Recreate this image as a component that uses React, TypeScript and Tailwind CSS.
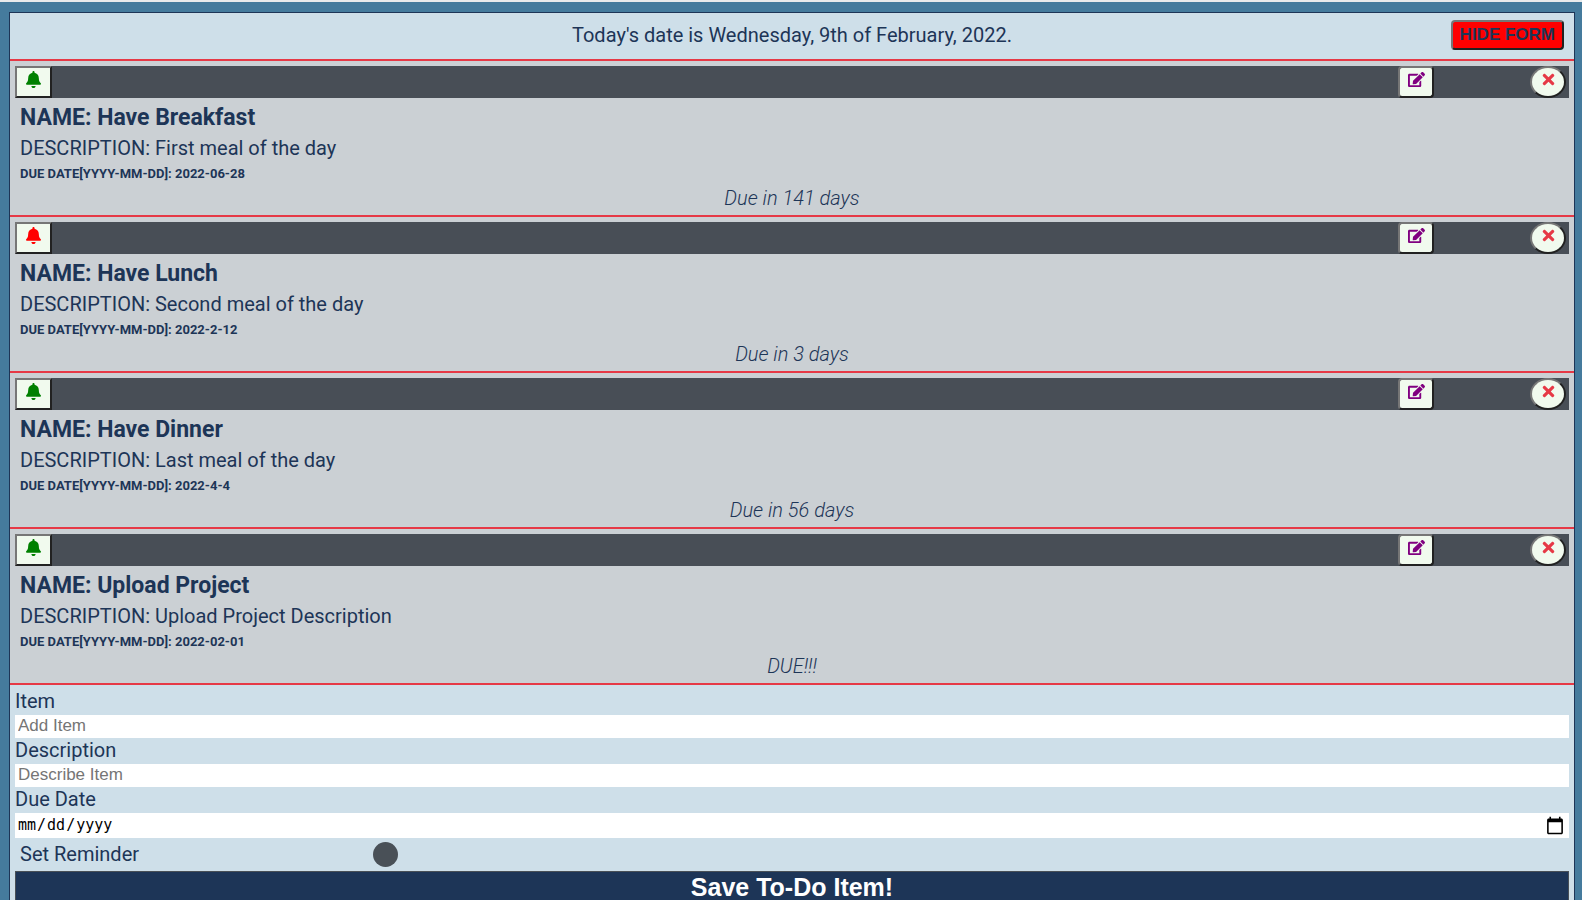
import { useState } from "react";
import { FaBell, FaEdit, FaTimes } from "react-icons/fa";

type Todo = {
  id: number;
  name: string;
  description: string;
  dueDate: string;
  status: string;
  reminder: boolean;
};

const initialTodos: Todo[] = [
  { id: 1, name: "Have Breakfast", description: "First meal of the day", dueDate: "2022-06-28", status: "Due in 141 days", reminder: true },
  { id: 2, name: "Have Lunch", description: "Second meal of the day", dueDate: "2022-2-12", status: "Due in 3 days", reminder: false },
  { id: 3, name: "Have Dinner", description: "Last meal of the day", dueDate: "2022-4-4", status: "Due in 56 days", reminder: true },
  { id: 4, name: "Upload Project", description: "Upload Project Description", dueDate: "2022-02-01", status: "DUE!!!", reminder: true },
];

const bevel = "border-2 border-t-[#767676] border-l-[#767676] border-b-[#212121] border-r-[#212121]";

function TodoCard({ todo, onToggle, onDelete }: { todo: Todo; onToggle: () => void; onDelete: () => void }) {
  return (
    <li className="border-b-2 border-[#e63946] bg-[#cbd0d4] px-[5px] py-[5px]">
      <div className="flex h-8 items-stretch bg-[#484e56]">
        <button
          type="button"
          aria-label="Toggle reminder"
          onClick={onToggle}
          className={`${bevel} flex w-[37px] items-center justify-center bg-[#f1faee] pb-[5px] text-[17px] ${todo.reminder ? "text-[#008000]" : "text-[#ff0000]"}`}
        >
          <FaBell />
        </button>
        <button
          type="button"
          aria-label="Edit item"
          className={`${bevel} mr-24 ml-auto flex w-9 items-center justify-center rounded bg-[#f1faee] pb-[5px] text-[17px] text-[#800080]`}
        >
          <FaEdit />
        </button>
        <button
          type="button"
          aria-label="Delete item"
          onClick={onDelete}
          className={`${bevel} mr-[3px] flex w-9 items-center justify-center rounded-[50%] bg-[#f1faee] pb-[5px] text-[17px] text-[#e63946]`}
        >
          <FaTimes />
        </button>
      </div>
      <div className="px-[5px]">
        <h3 className="pt-1 text-[23px] leading-8 font-bold">NAME: {todo.name}</h3>
        <p className="leading-7">DESCRIPTION: {todo.description}</p>
        <p className="text-[13px] leading-6 font-bold">DUE DATE[YYYY-MM-DD]: {todo.dueDate}</p>
        <p className="text-center leading-6 font-light italic">{todo.status}</p>
      </div>
    </li>
  );
}

const labelClass = "block pb-0.5 leading-6";
const inputClass = "block h-[23px] w-full bg-white px-[3px] pb-0.5 font-['Liberation_Sans',sans-serif] text-[17px] placeholder:text-[#757575] outline-none";

export default function App() {
  const [todos, setTodos] = useState(initialTodos);
  const [showForm, setShowForm] = useState(true);

  return (
    <div className="min-h-screen border-t-2 border-[#e9ebec] bg-[#457b9d] pt-2.5 pr-[7px] pl-[9px] font-['Roboto',sans-serif] text-[20px] text-[#1d3557]">
      <main className="border border-[#1d3557] bg-[#cedfe9]">
        <header className="grid h-12 grid-cols-[1fr_auto_1fr] items-center border-b-2 border-[#e63946] px-2.5 pb-0.5">
          <p className="col-start-2">Today's date is Wednesday, 9th of February, 2022.</p>
          <button
            type="button"
            onClick={() => setShowForm(!showForm)}
            className={`${bevel} h-[30px] justify-self-end rounded bg-[#ff0000] px-[7px] font-['Liberation_Sans',sans-serif] text-[17px] leading-6 font-bold`}
          >
            {showForm ? "HIDE FORM" : "SHOW FORM"}
          </button>
        </header>
        <ul>
          {todos.map((todo) => (
            <TodoCard
              key={todo.id}
              todo={todo}
              onToggle={() => setTodos(todos.map((t) => (t.id === todo.id ? { ...t, reminder: !t.reminder } : t)))}
              onDelete={() => setTodos(todos.filter((t) => t.id !== todo.id))}
            />
          ))}
        </ul>
        {showForm && (
          <form className="px-[5px] pt-1" onSubmit={(e) => e.preventDefault()}>
            <label htmlFor="item" className={labelClass}>Item</label>
            <input id="item" type="text" placeholder="Add Item" className={inputClass} />
            <label htmlFor="description" className={labelClass}>Description</label>
            <input id="description" type="text" placeholder="Describe Item" className={inputClass} />
            <label htmlFor="due" className={labelClass}>Due Date</label>
            <input
              id="due"
              type="date"
              className="block h-[25px] w-full bg-white px-0.5 font-['DejaVu_Sans_Mono',monospace] text-[15px] text-black outline-none [&::-webkit-calendar-picker-indicator]:size-5"
            />
            <div className="flex h-[33px] items-center pl-[5px]">
              <label htmlFor="reminder" className="w-[353px] pb-0.5">Set Reminder</label>
              <input id="reminder" type="checkbox" className="size-[25px] appearance-none rounded-full bg-[#495057]" />
            </div>
            <button
              type="submit"
              className="block w-full border border-[#495057] bg-[#1d3557] font-['Liberation_Sans',sans-serif] text-[25px] leading-[30px] font-bold text-white"
            >
              Save To-Do Item!
            </button>
          </form>
        )}
      </main>
    </div>
  );
}
